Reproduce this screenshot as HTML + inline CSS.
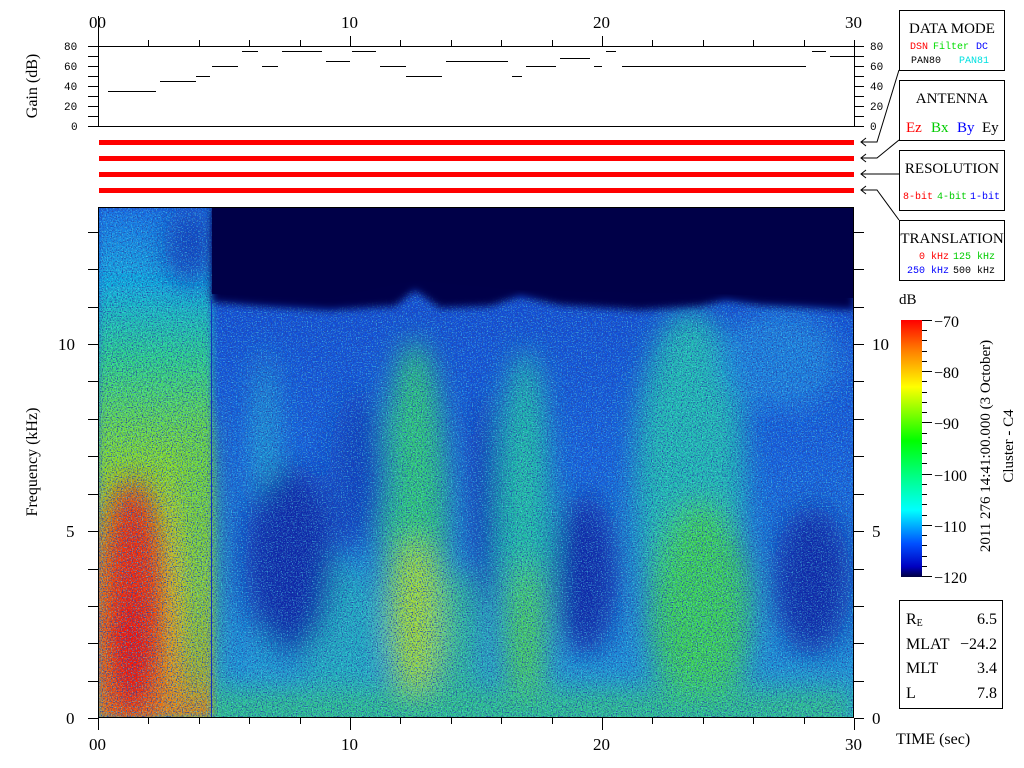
<!DOCTYPE html>
<html><head><meta charset="utf-8"><style>
html,body{margin:0;padding:0;background:#fff;width:1024px;height:768px;overflow:hidden}
svg{display:block}
text{font-family:"Liberation Serif",serif}
text.m,.m text{font-family:"Liberation Mono",monospace}
</style></head><body>
<svg width="1024" height="768" viewBox="0 0 1024 768" xmlns="http://www.w3.org/2000/svg">
<defs>
<filter id="b14" x="-50%" y="-50%" width="200%" height="200%"><feGaussianBlur stdDeviation="14"/></filter>
<filter id="b4" x="-20%" y="-20%" width="140%" height="140%"><feGaussianBlur stdDeviation="4"/></filter>
<filter id="nz" x="0" y="0" width="100%" height="100%" filterUnits="userSpaceOnUse">
<feTurbulence type="fractalNoise" baseFrequency="0.8" numOctaves="1" seed="3"/>
<feColorMatrix values="0 0 0 0 0.02  0 0 0 0 0.06  0 0 0 0 0.4  4 0 0 0 -1.9"/>
</filter>
<filter id="nz2" x="0" y="0" width="100%" height="100%" filterUnits="userSpaceOnUse">
<feTurbulence type="fractalNoise" baseFrequency="0.8" numOctaves="1" seed="11"/>
<feColorMatrix values="0 0 0 0 0.1  0 0 0 0 0.9  0 0 0 0 0.9  4 0 0 0 -2.1"/>
</filter>
<clipPath id="pc"><rect x="98" y="207" width="756" height="511"/></clipPath>
<clipPath id="pc2"><path d="M98 207H212V300L330 310L415 290L520 298L720 300L854 310V718H98Z"/></clipPath>
<linearGradient id="lg" x1="0" y1="0" x2="0" y2="1">
<stop offset="0" stop-color="#1a70e8"/><stop offset="0.15" stop-color="#10b0e0"/>
<stop offset="0.3" stop-color="#30d880"/><stop offset="0.5" stop-color="#90e020"/>
<stop offset="0.75" stop-color="#e0c010"/><stop offset="1" stop-color="#f08010"/>
</linearGradient>
<linearGradient id="cb" x1="0" y1="0" x2="0" y2="1">
<stop offset="0" stop-color="#ff0000"/><stop offset="0.12" stop-color="#ff8000"/>
<stop offset="0.26" stop-color="#ffff00"/><stop offset="0.47" stop-color="#00ff00"/>
<stop offset="0.62" stop-color="#00ff90"/><stop offset="0.74" stop-color="#00ffff"/>
<stop offset="0.87" stop-color="#0050ff"/><stop offset="0.96" stop-color="#0000c0"/>
<stop offset="1" stop-color="#000040"/>
</linearGradient>
<linearGradient id="bg" x1="0" y1="0" x2="0" y2="1">
<stop offset="0" stop-color="#1040d0"/><stop offset="0.5" stop-color="#1560e0"/><stop offset="1" stop-color="#20a0d8"/>
</linearGradient>
</defs>

<g clip-path="url(#pc)">
<rect x="98" y="207" width="756" height="511" fill="url(#bg)"/>
<g filter="url(#b14)">
<ellipse cx="415" cy="540" rx="32" ry="200" fill="#30d070"/>
<ellipse cx="415" cy="620" rx="22" ry="80" fill="#b0e020"/>
<ellipse cx="525" cy="540" rx="25" ry="190" fill="#20c8a0"/>
<ellipse cx="525" cy="640" rx="20" ry="80" fill="#50d850"/>
<ellipse cx="690" cy="480" rx="55" ry="170" fill="#20c0b0"/>
<ellipse cx="700" cy="610" rx="50" ry="110" fill="#40d850"/>
<ellipse cx="265" cy="520" rx="12" ry="170" fill="#20b0d0"/>
<ellipse cx="340" cy="640" rx="40" ry="80" fill="#20b0c0"/>
<ellipse cx="460" cy="640" rx="20" ry="70" fill="#30c090"/>
<ellipse cx="780" cy="360" rx="60" ry="50" fill="#1a80e0"/>
<rect x="98" y="690" width="756" height="40" fill="#30c880"/>
<ellipse cx="290" cy="560" rx="45" ry="95" fill="#0a28a8"/>
<ellipse cx="485" cy="500" rx="14" ry="110" fill="#0c30b0"/>
<ellipse cx="585" cy="575" rx="32" ry="80" fill="#0a28a8"/>
<ellipse cx="812" cy="580" rx="38" ry="75" fill="#0a28a8"/>
<ellipse cx="360" cy="470" rx="30" ry="80" fill="#1040c0"/>
</g>
<rect x="98" y="207" width="114" height="511" fill="url(#lg)" filter="url(#b4)"/>
<g filter="url(#b14)">
<ellipse cx="190" cy="245" rx="25" ry="40" fill="#1040c0"/>
<ellipse cx="132" cy="600" rx="30" ry="120" fill="#ff2000"/>
<ellipse cx="130" cy="660" rx="22" ry="60" fill="#ff0800"/>
<ellipse cx="200" cy="560" rx="12" ry="150" fill="#60d840"/>
</g>
<g clip-path="url(#pc2)">
<rect x="98" y="207" width="756" height="511" filter="url(#nz)"/>
<rect x="98" y="207" width="756" height="511" filter="url(#nz2)" opacity="0.6"/>
</g>
<path d="M212 207 L854 207 L854 310 L820 308 L760 305 L725 300 L700 306 L640 310 L560 305 L520 296 L490 306 L440 308 L415 290 L395 306 L330 310 L260 306 L212 302 Z" fill="#000048" filter="url(#b4)"/>
<path d="M212 207 L854 207 L854 298 L720 294 L520 290 L415 280 L330 298 L212 294 Z" fill="#000048"/>
<line x1="211.5" y1="300" x2="211.5" y2="718" stroke="#1030c0" stroke-width="1"/>
</g>
<rect x="98.5" y="207.5" width="755" height="510" fill="none" stroke="#000" stroke-width="1"/>

<g stroke="#000" stroke-width="1" fill="none">
<line x1="98.5" y1="16" x2="98.5" y2="126"/>
<line x1="88" y1="46.5" x2="854" y2="46.5"/>
<line x1="88" y1="126.5" x2="854" y2="126.5"/>
<line x1="854.5" y1="40" x2="854.5" y2="126"/>
</g>
<g stroke="#000" stroke-width="1">
<path d="M148.5 40v6M199.5 40v6M249.5 40v6M300.5 40v6M350.5 36v10M400.5 40v6M451.5 40v6M501.5 40v6M552.5 40v6M602.5 36v10M652.5 40v6M703.5 40v6M753.5 40v6M804.5 40v6"/>
<path d="M88 56.5h10M88 66.5h10M88 76.5h10M88 86.5h10M88 96.5h10M88 106.5h10M88 116.5h10"/>
<path d="M854 46.5h10M854 56.5h10M854 66.5h10M854 76.5h10M854 86.5h10M854 96.5h10M854 106.5h10M854 116.5h10M854 126.5h10"/>
</g>
<path stroke="#000" stroke-width="1" fill="none" d="M108 91.5H156M160 81.5H196M196 76.5H210M212 66.5H238M242 51.5H258M262 66.5H278M282 51.5H322M326 61.5H350M352 51.5H376M380 66.5H406M406 76.5H442M446 61.5H508M512 76.5H522M526 66.5H556M560 58.5H590M594 66.5H602M606 51.5H616M622 66.5H806M812 51.5H826M830 56.5H854"/>
<g class="m" font-size="11" fill="#000">
<text x="64" y="50">80</text><text x="64" y="70">60</text><text x="64" y="90">40</text><text x="64" y="110">20</text><text x="71" y="130">0</text>
<text x="870" y="50">80</text><text x="870" y="70">60</text><text x="870" y="90">40</text><text x="870" y="110">20</text><text x="870" y="130">0</text>
</g>
<g font-size="17" fill="#000">
<text x="89" y="28">00</text><text x="341" y="28">10</text><text x="593" y="28">20</text><text x="845" y="28">30</text>
<text transform="translate(37,86) rotate(-90)" text-anchor="middle" font-size="16">Gain (dB)</text>
</g>

<g fill="#ff0000">
<rect x="99" y="140" width="755" height="5"/><rect x="99" y="156" width="755" height="5"/>
<rect x="99" y="172" width="755" height="5"/><rect x="99" y="188" width="755" height="5"/>
</g>

<g stroke="#000" stroke-width="1">
<path d="M88 718.5h10M88 681.5h10M88 643.5h10M88 606.5h10M88 569.5h10M88 531.5h10M88 494.5h10M88 456.5h10M88 419.5h10M88 381.5h10M88 344.5h10M88 307.5h10M88 269.5h10M88 232.5h10"/>
<path d="M854 718.5h10M854 681.5h10M854 643.5h10M854 606.5h10M854 569.5h10M854 531.5h10M854 494.5h10M854 456.5h10M854 419.5h10M854 381.5h10M854 344.5h10M854 307.5h10M854 269.5h10M854 232.5h10"/>
<path d="M98.5 718v12M148.5 718v6M199.5 718v6M249.5 718v6M300.5 718v6M350.5 718v12M400.5 718v6M451.5 718v6M501.5 718v6M552.5 718v6M602.5 718v12M652.5 718v6M703.5 718v6M753.5 718v6M804.5 718v6M854.5 718v12"/>
</g>
<g font-size="17" fill="#000">
<text x="66" y="724">0</text><text x="66" y="537">5</text><text x="58" y="350">10</text>
<text x="872" y="724">0</text><text x="872" y="537">5</text><text x="872" y="350">10</text>
<text x="89" y="750">00</text><text x="341" y="750">10</text><text x="593" y="750">20</text><text x="845" y="750">30</text>
<text transform="translate(37,462) rotate(-90)" text-anchor="middle" font-size="16">Frequency (kHz)</text>
<text x="896" y="744" font-size="16">TIME (sec)</text>
</g>

<g stroke="#000" stroke-width="1" fill="#fff">
<rect x="899.5" y="10.5" width="105" height="60"/>
<rect x="899.5" y="80.5" width="105" height="60"/>
<rect x="899.5" y="150.5" width="105" height="60"/>
<rect x="899.5" y="220.5" width="105" height="60"/>
</g>
<g stroke="#000" stroke-width="1" fill="none">
<path d="M899 70L877 142H861M866 138L861 142L866 146"/>
<path d="M899 140L877 158H861M866 154L861 158L866 162"/>
<path d="M899 174H861M866 170L861 174L866 178"/>
<path d="M899 220L877 190H861M866 186L861 190L866 194"/>
</g>
<g font-size="15" fill="#000" text-anchor="middle">
<text x="952" y="33">DATA MODE</text>
<text x="952" y="103">ANTENNA</text>
<text x="952" y="173">RESOLUTION</text>
<text x="952" y="243">TRANSLATION</text>
</g>
<g class="m" font-size="10">
<text x="910" y="49" fill="#ff0000">DSN</text><text x="933" y="49" fill="#00dd00">Filter</text><text x="976" y="49" fill="#0000ff">DC</text>
<text x="911" y="63" fill="#000">PAN80</text><text x="959" y="63" fill="#00e0e0">PAN81</text>
<text x="903" y="199" fill="#ff0000">8-bit</text><text x="937" y="199" fill="#00cc00">4-bit</text><text x="970" y="199" fill="#0000ff">1-bit</text>
<text x="919" y="259" fill="#ff0000">0 kHz</text><text x="953" y="259" fill="#00cc00">125 kHz</text>
<text x="907" y="273" fill="#0000ff">250 kHz</text><text x="953" y="273" fill="#000">500 kHz</text>
</g>
<g font-size="15">
<text x="906" y="132" fill="#ff0000">Ez</text><text x="931" y="132" fill="#00cc00">Bx</text><text x="957" y="132" fill="#0000ff">By</text><text x="982" y="132" fill="#000">Ey</text>
</g>

<rect x="901" y="320" width="21" height="257" fill="url(#cb)"/>
<g stroke="#000" stroke-width="1">
<path d="M922 320.5h10M922 330.5h5M922 340.5h5M922 351.5h5M922 361.5h5M922 371.5h10M922 381.5h5M922 392.5h5M922 402.5h5M922 412.5h5M922 422.5h10M922 433.5h5M922 443.5h5M922 453.5h5M922 463.5h5M922 474.5h10M922 484.5h5M922 494.5h5M922 504.5h5M922 515.5h5M922 525.5h10M922 535.5h5M922 545.5h5M922 556.5h5M922 566.5h5M922 576.5h10"/>
</g>
<g font-size="16" fill="#000">
<text x="899" y="304" font-size="15">dB</text>
<text x="934" y="327">−70</text><text x="934" y="378">−80</text><text x="934" y="429">−90</text>
<text x="934" y="481">−100</text><text x="934" y="532">−110</text><text x="934" y="583">−120</text>
</g>
<text transform="translate(990,446) rotate(-90)" text-anchor="middle" font-size="15" fill="#000">2011 276 14:41:00.000 (3 October)</text>
<text transform="translate(1013,446) rotate(-90)" text-anchor="middle" font-size="15" fill="#000">Cluster - C4</text>

<rect x="899.5" y="600.5" width="103" height="108" fill="#fff" stroke="#000"/>
<g font-size="16" fill="#000">
<text x="906" y="624">R<tspan font-size="10" dy="2">E</tspan></text><text x="997" y="624" text-anchor="end">6.5</text>
<text x="906" y="649">MLAT</text><text x="997" y="649" text-anchor="end">−24.2</text>
<text x="906" y="673">MLT</text><text x="997" y="673" text-anchor="end">3.4</text>
<text x="906" y="698">L</text><text x="997" y="698" text-anchor="end">7.8</text>
</g>
</svg>
</body></html>
